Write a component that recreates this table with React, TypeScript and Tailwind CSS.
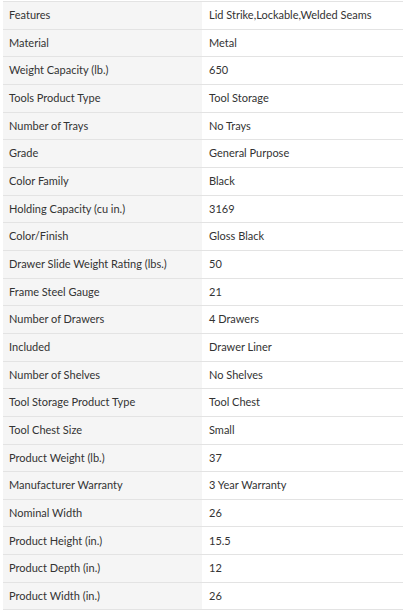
const specs: [string, string][] = [
  ["Features", "Lid Strike,Lockable,Welded Seams"],
  ["Material", "Metal"],
  ["Weight Capacity (lb.)", "650"],
  ["Tools Product Type", "Tool Storage"],
  ["Number of Trays", "No Trays"],
  ["Grade", "General Purpose"],
  ["Color Family", "Black"],
  ["Holding Capacity (cu in.)", "3169"],
  ["Color/Finish", "Gloss Black"],
  ["Drawer Slide Weight Rating (lbs.)", "50"],
  ["Frame Steel Gauge", "21"],
  ["Number of Drawers", "4 Drawers"],
  ["Included", "Drawer Liner"],
  ["Number of Shelves", "No Shelves"],
  ["Tool Storage Product Type", "Tool Chest"],
  ["Tool Chest Size", "Small"],
  ["Product Weight (lb.)", "37"],
  ["Manufacturer Warranty", "3 Year Warranty"],
  ["Nominal Width", "26"],
  ["Product Height (in.)", "15.5"],
  ["Product Depth (in.)", "12"],
  ["Product Width (in.)", "26"],
]

export default function App() {
  return (
    <div className="bg-white pt-px pl-[3px] pr-[5px] font-['Lato',sans-serif] text-[11px] text-[#333]">
      <div className="border-t border-[#e3e3e3]">
        {specs.map(([label, value]) => (
          <div key={label} className="grid h-[27.67px] grid-cols-[199px_1fr] border-b border-[#e3e3e3]">
            <div className="flex items-center bg-[#f5f5f5] pl-[6px]">{label}</div>
            <div className="flex items-center pl-[7px]">{value}</div>
          </div>
        ))}
      </div>
    </div>
  )
}
